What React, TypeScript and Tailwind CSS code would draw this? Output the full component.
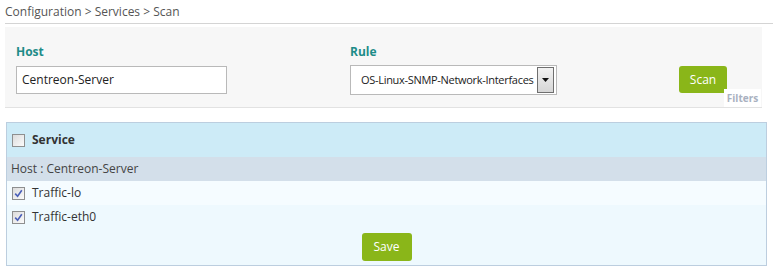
import React from "react";

function Check({ checked }: { checked?: boolean }) {
  return (
    <span className="inline-flex h-[13px] w-[13px] shrink-0 items-center justify-center border border-[#8e8f8f] bg-gradient-to-br from-[#dcdcdc] to-[#fbfbfb]">
      {checked && (
        <svg width="9" height="9" viewBox="0 0 9 9">
          <path d="M1.2 4.6 L3.6 7.3 L7.8 1.2" stroke="#4a5fb8" strokeWidth="1.6" fill="none" />
        </svg>
      )}
    </span>
  );
}

export default function App() {
  return (
    <div className="w-[773px] h-[274px] bg-white text-[12px] text-[#333]" style={{ fontFamily: '"Open Sans", "DejaVu Sans", sans-serif' }}>
      <div className="ml-[5px] h-[24px] border-b border-[#d4d4d4] pt-[3px] leading-[17px] text-[#555]">
        Configuration &gt; Services &gt; Scan
      </div>
      <div className="relative ml-[5px] mt-[3px] h-[81px] w-[757px] border-b border-[#e2e2e2] bg-[#f7f7f7]">
        <div className="flex items-start">
          <div className="ml-[11px] w-[334px] pt-[17px]">
            <div className="h-[22px] font-bold leading-[16px] text-[#1e8c88]">Host</div>
            <div className="flex h-[28px] w-[211px] items-center border border-[#b9b9b9] bg-white pl-[5px] text-[#222]">
              Centreon-Server
            </div>
          </div>
          <div className="w-[329px] pt-[17px]">
            <div className="h-[21px] font-bold leading-[16px] text-[#1e8c88]">Rule</div>
            <div className="flex h-[30px] w-[207px] items-center border border-[#b9b9b9] bg-white pl-[10px] pr-[2px] text-[#222]">
              <span className="flex-1 whitespace-nowrap text-[11px] tracking-[-0.3px]">OS-Linux-SNMP-Network-Interfaces</span>
              <span className="ml-[2px] flex h-[26px] w-[17px] shrink-0 items-center justify-center border border-[#6f6f6f] bg-gradient-to-b from-[#f2f2f2] to-[#d6d6d6]">
                <svg width="7" height="4" viewBox="0 0 7 4"><path d="M0 0 H7 L3.5 4 Z" fill="#111" /></svg>
              </span>
            </div>
          </div>
          <div className="pt-[39px]">
            <div className="flex h-[27px] w-[48px] items-center justify-center rounded-[3px] bg-[#8ab619] text-white">
              Scan
            </div>
          </div>
        </div>
        <div className="absolute bottom-0 right-[1px] flex h-[18px] w-[37px] items-center justify-center bg-white text-[10px] font-bold text-[#a9b1c0]">
          Filters
        </div>
      </div>
      <div className="ml-[6px] mt-[14px] w-[761px] border border-[#bccedf] bg-[#eef9fe]">
        <div className="flex h-[34px] items-center gap-[7px] bg-[#cdebf7] pl-[5px]">
          <Check />
          <span className="font-bold text-[#333]">Service</span>
        </div>
        <div className="flex h-[24px] items-center bg-[#d3dfea] pl-[4px] text-[#444]">Host : Centreon-Server</div>
        <div className="flex h-[24px] items-center gap-[7px] bg-[#f5fcff] pl-[5px]">
          <Check checked />
          <span>Traffic-lo</span>
        </div>
        <div className="flex h-[24px] items-center gap-[7px] pl-[5px]">
          <Check checked />
          <span>Traffic-eth0</span>
        </div>
        <div className="flex h-[36px] items-center justify-center">
          <div className="flex h-[28px] w-[50px] items-center justify-center rounded-[3px] bg-[#8ab619] text-white">Save</div>
        </div>
      </div>
    </div>
  );
}
